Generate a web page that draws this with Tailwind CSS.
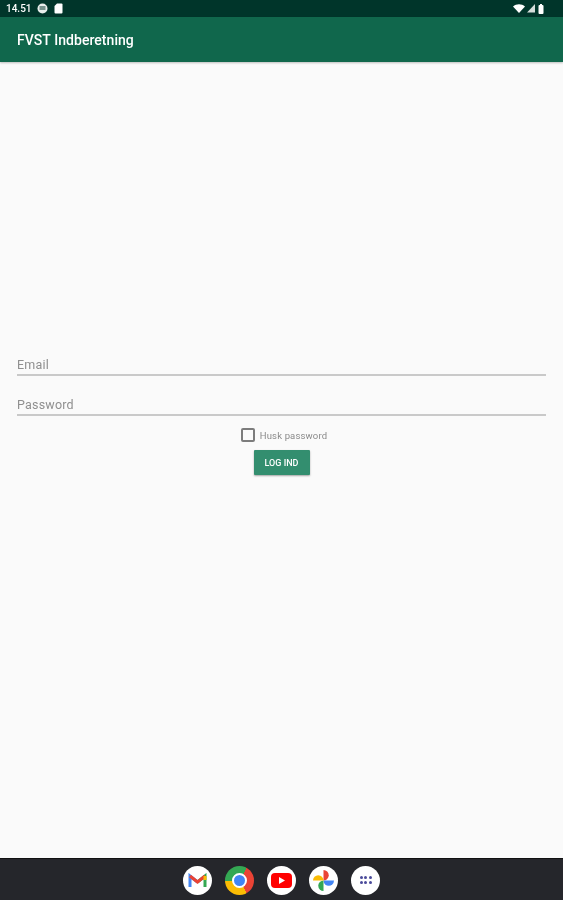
<!DOCTYPE html>
<html>
<head>
<meta charset="utf-8">
<script src="https://cdn.jsdelivr.net/npm/@tailwindcss/browser@4"></script>
</head>
<body class="m-0 bg-[#fafafa]">
<div class="w-[563px] h-[900px] flex flex-col bg-[#fafafa] overflow-hidden font-['Roboto',sans-serif] blur-[0.4px]">
  <div class="h-[17px] shrink-0 bg-[#00352a] flex items-center justify-between pl-[6px] pr-[19px] text-white">
    <div class="flex items-center gap-[5px]">
      <span class="text-[10px] leading-none font-medium">14.51</span>
      <svg width="11" height="11" viewBox="0 0 11 11"><circle cx="5.5" cy="5.5" r="5" fill="#e8eeec"/><rect x="2.5" y="3.5" width="6" height="1" fill="#00352a"/><rect x="2.5" y="5.5" width="6" height="1" fill="#00352a"/></svg>
      <svg width="9" height="11" viewBox="0 0 9 11" class="ml-[1px]"><path d="M3 0.5H7.500a1 1 0 0 1 1 1V9.500a1 1 0 0 1-1 1H1.500a1 1 0 0 1-1-1V3z" fill="#fff"/></svg>
    </div>
    <div class="flex items-center gap-[2px]">
      <svg width="12" height="9" viewBox="0 0 12 9"><path d="M0 2.500C3.300 -0.500 8.700 -0.500 12 2.500L6 9z" fill="#fff"/></svg>
      <svg width="8" height="9" viewBox="0 0 8 9"><path d="M8 0V8.500H0z" fill="#d5dedb"/></svg>
      <svg width="6" height="10" viewBox="0 0 6 10" class="ml-[1px]"><path d="M1.500 1H2V0H4V1H4.500A1 1 0 0 1 5.500 2V9A1 1 0 0 1 4.500 10H1.500A1 1 0 0 1 .5 9V2A1 1 0 0 1 1.500 1z" fill="#fff"/></svg>
    </div>
  </div>
  <header class="h-[45px] shrink-0 bg-[#10674c] flex items-center pl-[17px] shadow-[0_1px_2px_rgba(0,0,0,0.25)]">
    <span class="text-white text-[14px] font-medium leading-none tracking-[0.05px]">FVST Indberetning</span>
  </header>
  <main class="flex-1 flex flex-col px-[17px] pt-[276px]">
    <div class="h-[38px] flex items-end border-b-[2px] border-[#c9c9c9]">
      <span class="text-[12.500px] leading-[18px] text-[#8f8f8f] tracking-[0.2px]">Email</span>
    </div>
    <div class="h-[40px] flex items-end border-b-[2px] border-[#c9c9c9]">
      <span class="text-[12.500px] leading-[18px] text-[#8f8f8f] tracking-[0.2px]">Password</span>
    </div>
    <div class="mt-[12px] flex items-center justify-center gap-[5px] pl-[5px]">
      <span class="w-[14px] h-[14px] rounded-[2px] border-[2px] border-[#7c7c7c]"></span>
      <span class="text-[9.500px] leading-none text-[#8a8a8a] tracking-[0.15px] pt-[1px]">Husk password</span>
    </div>
    <div class="mt-[8px] flex justify-center">
      <button class="w-[56px] h-[25px] rounded-[1px] bg-[#338e6f] text-white text-[9px] font-medium pt-[2px] shadow-[0_1px_2px_rgba(0,0,0,0.35)]">LOG IND</button>
    </div>
  </main>
  <nav class="h-[42px] shrink-0 bg-[#25262b] border-t-[1px] border-[#111] flex items-center justify-center gap-[13px] pt-[1px]">
    <span class="w-[29px] h-[29px] rounded-full bg-white flex items-center justify-center">
      <svg width="19" height="15" viewBox="0 0 19 15" fill="none"><path d="M2 14V3L9.500 9" stroke="#4285f4" stroke-width="3"/><path d="M17 14V3L9.500 9" stroke="#34a853" stroke-width="3"/><path d="M2 3L9.500 9L17 3" stroke="#ea4335" stroke-width="3"/><path d="M17 7V3" stroke="#fbbc04" stroke-width="3"/></svg>
    </span>
    <span class="w-[29px] h-[29px] rounded-full flex items-center justify-center bg-[conic-gradient(from_30deg,#ea4335_0_120deg,#fbbc04_120deg_240deg,#34a853_240deg_360deg)]">
      <span class="w-[11px] h-[11px] rounded-full bg-[#4285f4] border-[2px] border-white box-content"></span>
    </span>
    <span class="w-[29px] h-[29px] rounded-full bg-white flex items-center justify-center">
      <svg width="21" height="15" viewBox="0 0 21 15"><rect width="21" height="15" rx="4" fill="#f00"/><path d="M8 4L14 7.500L8 11z" fill="#fff"/></svg>
    </span>
    <span class="w-[29px] h-[29px] rounded-full bg-white flex items-center justify-center">
      <svg width="21" height="21" viewBox="0 0 21 21"><path d="M10.500 10.500V0a5.250 5.250 0 0 1 0 10.500z" fill="#ea4335"/><path d="M10.500 10.500H21a5.250 5.250 0 0 1-10.500 0z" fill="#4285f4"/><path d="M10.500 10.500V21a5.250 5.250 0 0 1 0-10.500z" fill="#34a853"/><path d="M10.500 10.500H0a5.250 5.250 0 0 1 10.500 0z" fill="#fbbc04"/></svg>
    </span>
    <span class="w-[29px] h-[29px] rounded-full bg-white flex items-center justify-center">
      <span class="grid grid-cols-3 gap-[1.500px]">
        <i class="w-[3px] h-[3px] rounded-full bg-[#4a4a9a]"></i><i class="w-[3px] h-[3px] rounded-full bg-[#4a4a9a]"></i><i class="w-[3px] h-[3px] rounded-full bg-[#4a4a9a]"></i>
        <i class="w-[3px] h-[3px] rounded-full bg-[#4a4a9a]"></i><i class="w-[3px] h-[3px] rounded-full bg-[#4a4a9a]"></i><i class="w-[3px] h-[3px] rounded-full bg-[#4a4a9a]"></i>
      </span>
    </span>
  </nav>
</div>
</body>
</html>
